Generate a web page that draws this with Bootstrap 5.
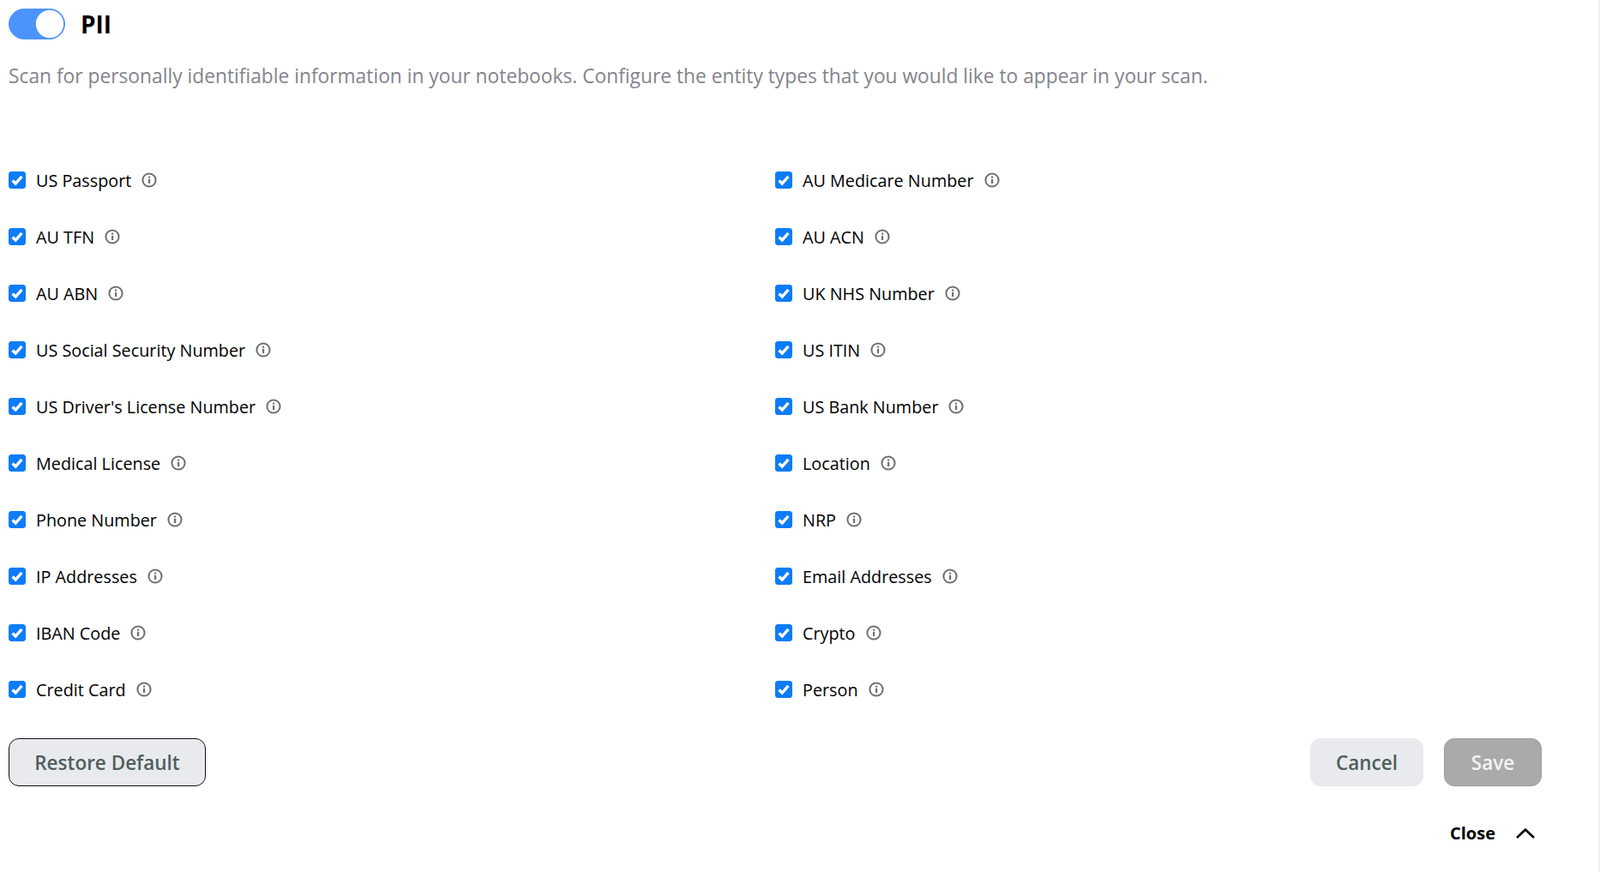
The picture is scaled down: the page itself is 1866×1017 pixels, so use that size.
<!DOCTYPE html>
<html lang="en">
<head>
  <meta charset="UTF-8">
  <meta name="viewport" content="width=device-width, initial-scale=1.0">
  <title>PII</title>
  <link href="https://cdn.jsdelivr.net/npm/bootstrap@5.3.0/dist/css/bootstrap.min.css" rel="stylesheet">
  <style>
    body { font-family: "Open Sans", "Noto Sans", sans-serif; color: #000; height: 1017px; overflow: hidden; border-right: 2px solid #f0f0f0; }
    .pii-panel { padding: 10px 0 0 10px; }
    .pii-switch.form-switch { padding-left: 0; margin: 0; min-height: 0; height: 36px; }
    .pii-switch .form-check-input { width: 66px; height: 36px; margin: 0; float: none; border-color: #4b94fb; background-color: #4b94fb; background-image: url("data:image/svg+xml,%3csvg xmlns='http://www.w3.org/2000/svg' viewBox='-4 -4 8 8'%3e%3ccircle r='3.8' fill='%23fff'/%3e%3c/svg%3e"); }
    .pii-title { font-size: 28px; font-weight: 700; margin: 0 0 0 18px; line-height: 36px; }
    .pii-desc { font-size: 22.77px; color: #84848c; margin: 27px 0 0; line-height: 32px; }
    .pii-grid { margin-top: 73px; display: grid; grid-template-columns: 894px 1fr; row-gap: 0; }
    .pii-item { height: 66px; display: flex; align-items: center; margin: 0; padding: 0; }
    .pii-item .form-check-input { width: 20px; height: 20px; margin: 0 12px 2px 0; float: none; border-color: #0d7cf8; background-color: #0d7cf8; border-radius: 3px; flex: none; background-image: url("data:image/svg+xml,%3csvg xmlns='http://www.w3.org/2000/svg' viewBox='0 0 20 20'%3e%3cpath fill='none' stroke='%23fff' stroke-width='3.8' d='M4 10.500l4 4 8-9'/%3e%3c/svg%3e"); }
    .pii-item label { font-size: 19.8px; line-height: 28px; }
    .pii-info { margin-left: 12px; color: #6f6f6f; flex: none; position: relative; top: -1px; }
    .pii-actions { display: flex; align-items: center; margin-top: 23px; padding-right: 66px; }
    .pii-btn { height: 56px; padding-top: 8px; font-size: 22.5px; font-weight: 600; border-radius: 12px; color: #4f5f5c; background: #e9eaee; border: 0; }
    .pii-restore { width: 230px; border: 1px solid #111; }
    .pii-cancel { width: 132px; margin-left: auto; }
    .pii-save { width: 114px; margin-left: 24px; background: #aaa; color: #f4f4f4; border: 1px solid #9c9c9c; }
    .pii-close { display: flex; justify-content: flex-end; align-items: center; gap: 24px; margin-top: 41px; padding-right: 74px; font-size: 20px; font-weight: 700; line-height: 28px; }
  </style>
</head>
<body>
  <div class="pii-panel">
    <div class="d-flex align-items-center">
      <div class="form-check form-switch pii-switch">
        <input class="form-check-input" type="checkbox" role="switch" id="piiToggle" checked>
      </div>
      <h1 class="pii-title">PII</h1>
    </div>
    <p class="pii-desc">Scan for personally identifiable information in your notebooks. Configure the entity types that you would like to appear in your scan.</p>

    <div class="pii-grid" id="piiGrid"></div>

    <div class="pii-actions">
      <button type="button" class="btn pii-btn pii-restore">Restore Default</button>
      <button type="button" class="btn pii-btn pii-cancel">Cancel</button>
      <button type="button" class="btn pii-btn pii-save">Save</button>
    </div>
    <div class="pii-close">
      <span>Close</span>
      <svg width="22" height="14" viewBox="0 0 22 14" fill="none" stroke="#000" stroke-width="2.6"><path d="M1 12 L11 2.500 L21 12"/></svg>
    </div>
  </div>

  <script src="https://cdn.jsdelivr.net/npm/bootstrap@5.3.0/dist/js/bootstrap.bundle.min.js"></script>
  <script>
    let entities = [
      "US Passport", "AU Medicare Number",
      "AU TFN", "AU ACN",
      "AU ABN", "UK NHS Number",
      "US Social Security Number", "US ITIN",
      "US Driver's License Number", "US Bank Number",
      "Medical License", "Location",
      "Phone Number", "NRP",
      "IP Addresses", "Email Addresses",
      "IBAN Code", "Crypto",
      "Credit Card", "Person",
    ];
    let infoIcon = `<svg class="pii-info" width="18" height="18" viewBox="0 0 18 18"><circle cx="9" cy="9" r="7.600" fill="none" stroke="currentColor" stroke-width="2"/><rect x="8" y="7.800" width="2.200" height="5.200" fill="currentColor"/><rect x="8" y="4.600" width="2.200" height="2" fill="currentColor"/></svg>`;
    let grid = document.getElementById("piiGrid");
    entities.forEach((name, i) => {
      let item = document.createElement("div");
      item.className = "form-check pii-item";
      item.innerHTML = `<input class="form-check-input" type="checkbox" id="pii${i}" checked><label for="pii${i}">${name}</label>${infoIcon}`;
      grid.appendChild(item);
    });
  </script>
</body>
</html>
